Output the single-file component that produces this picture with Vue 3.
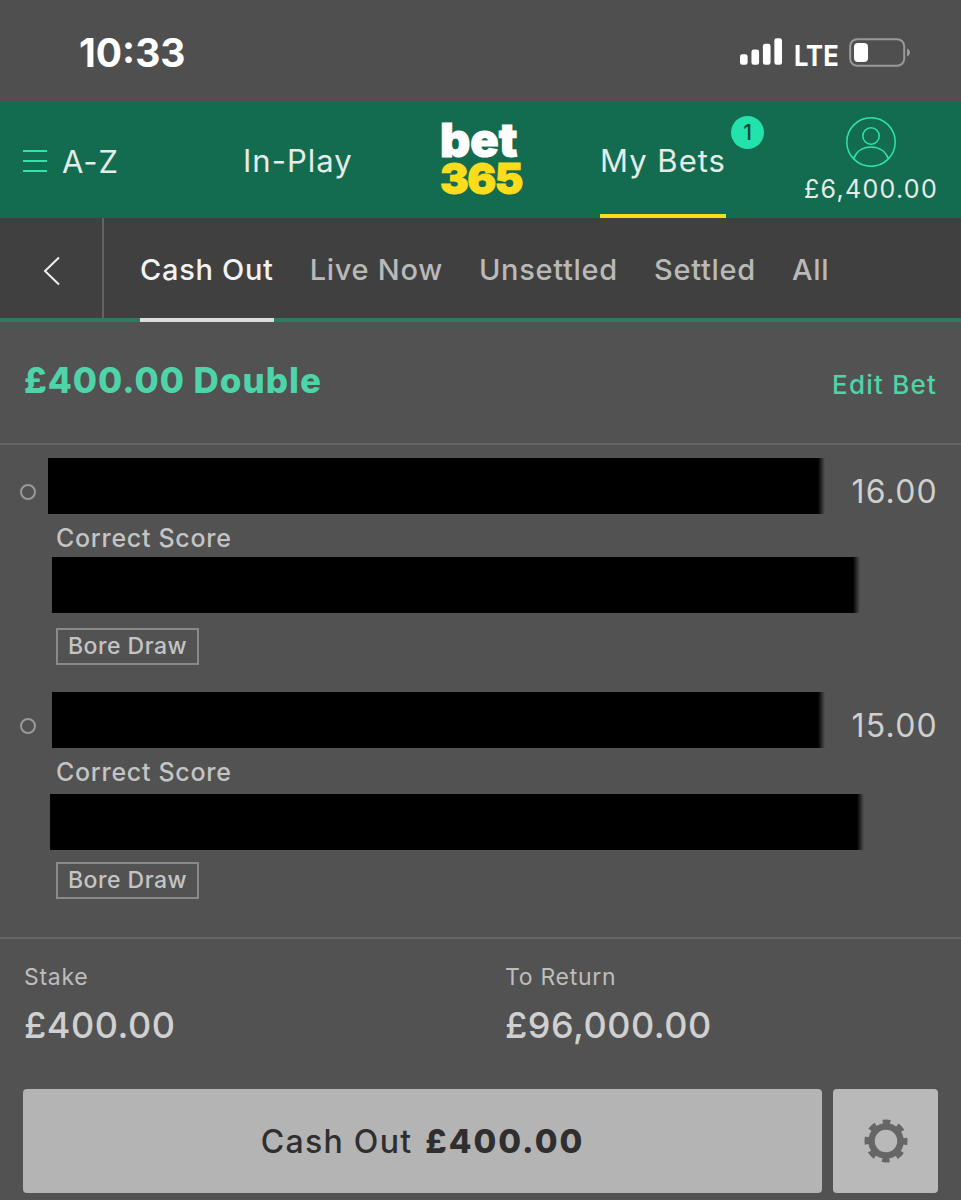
<template>
  <div class="screen">
    <div class="status">
      <span class="time">10:33</span>
      <div class="status-right">
        <svg class="signal" width="42" height="27" viewBox="0 0 44 28">
          <rect x="0" y="17" width="8" height="11" rx="2.5" />
          <rect x="12" y="12" width="8" height="16" rx="2.5" />
          <rect x="24" y="6" width="8" height="22" rx="2.5" />
          <rect x="36" y="0" width="8" height="28" rx="2.5" />
        </svg>
        <span class="lte">LTE</span>
        <svg class="battery" width="62" height="30" viewBox="0 0 62 30">
          <rect x="1.2" y="1.2" width="54" height="26.6" rx="7" fill="none" stroke="#9a9a9a" stroke-width="2" />
          <rect x="5" y="5" width="14" height="19" rx="4" fill="#fff" />
          <path d="M58 10.5c2 .8 3 2.200 3 4s-1 3.200-3 4z" fill="#9a9a9a" />
        </svg>
      </div>
    </div>

    <header class="topbar">
      <div class="az">
        <svg width="24" height="22" viewBox="0 0 24 22">
          <path d="M0 1h24M0 11h24M0 21h24" stroke="#2fe3ac" stroke-width="2" fill="none" />
        </svg>
        <span>A-Z</span>
      </div>
      <span class="inplay">In-Play</span>
      <div class="logo">
        <span class="bet">bet</span>
        <span class="num">365</span>
      </div>
      <div class="mybets">
        <span>My Bets</span>
        <i class="badge">1</i>
      </div>
      <div class="account">
        <svg width="50" height="50" viewBox="0 0 50 50" fill="none" stroke="#2fe3ac" stroke-width="1.500">
          <circle cx="25" cy="25" r="24.200" />
          <circle cx="25" cy="19" r="8.200" />
          <path d="M7.500 42c3-8 10-12 17.500-12s14.500 4 17.500 12" />
        </svg>
        <span>£6,400.00</span>
      </div>
    </header>

    <nav class="subnav">
      <div class="back">
        <svg width="18" height="30" viewBox="0 0 18 30">
          <path d="M16 1.500 2 15l14 13.500" fill="none" stroke="#eee" stroke-width="2" />
        </svg>
      </div>
      <div class="tabs">
        <span v-for="(t, i) in tabs" :key="t" class="tab" :class="{ on: i === 0 }">{{ t }}</span>
      </div>
    </nav>

    <section class="title">
      <h1>£400.00 Double</h1>
      <span class="edit">Edit Bet</span>
    </section>

    <section class="legs">
      <div v-for="leg in legs" :key="leg.odds" class="leg">
        <div class="top-row">
          <i class="dot"></i>
          <div class="redact" :style="{ marginLeft: leg.nameLeft + 'px', width: leg.nameWidth + 'px' }"></div>
          <span class="odds">{{ leg.odds }}</span>
        </div>
        <div class="market">Correct Score</div>
        <div class="redact second" :style="{ top: leg.teamTop + 'px', left: leg.teamLeft + 'px', width: leg.teamWidth + 'px' }"></div>
        <span class="tag">Bore Draw</span>
      </div>
    </section>

    <section class="totals">
      <div class="col">
        <label>Stake</label>
        <strong>£400.00</strong>
      </div>
      <div class="col">
        <label>To Return</label>
        <strong>£96,000.00</strong>
      </div>
    </section>

    <section class="actions">
      <button class="cash">Cash Out <b>£400.00</b></button>
      <button class="gear">
        <svg width="46" height="46" viewBox="0 0 46 46" fill="none" stroke="#666">
          <circle cx="23" cy="23" r="14.500" stroke-width="6.500" />
          <circle cx="23" cy="23" r="19" stroke-width="5" stroke-dasharray="7.500 7.420" stroke-dashoffset="3.750" />
        </svg>
      </button>
    </section>
  </div>
</template>

<script setup>
const tabs = ['Cash Out', 'Live Now', 'Unsettled', 'Settled', 'All']

const legs = [
  { odds: '16.00', nameLeft: 12, nameWidth: 777, teamLeft: 52, teamWidth: 808, teamTop: 99 },
  { odds: '15.00', nameLeft: 16, nameWidth: 773, teamLeft: 50, teamWidth: 814, teamTop: 102 }
]
</script>

<style>
html,
body {
  background: #525252;
}
</style>

<style scoped>
.screen {
  width: 961px;
  height: 1200px;
  overflow: hidden;
  background: #525252;
  color: #c6c6c6;
  font-family: Inter, "Liberation Sans", sans-serif;
}

.status {
  height: 101px;
  box-sizing: border-box;
  display: flex;
  justify-content: space-between;
  padding: 32px 50px 0 79px;
  background: #4f4f4f;
}

.time {
  font-size: 39px;
  line-height: 42px;
  font-weight: 700;
  color: #fff;
}

.status-right {
  display: flex;
  align-items: flex-start;
  padding-top: 6px;
}

.signal {
  fill: #fff;
}

.lte {
  font-size: 29px;
  line-height: 36px;
  font-weight: 700;
  color: #fff;
  margin-left: 12px;
  transform: scaleX(0.88);
  transform-origin: left center;
  width: 45px;
}

.battery {
  margin-left: 10px;
}

.topbar {
  height: 117px;
  position: relative;
  display: flex;
  background: #146c50;
  color: #e4ece8;
  font-size: 31px;
  letter-spacing: 1px;
}

.az {
  width: 243px;
  box-sizing: border-box;
  padding-left: 23px;
  display: flex;
  align-items: center;
  gap: 15px;
  height: 120px;
}

.inplay {
  width: 197px;
  line-height: 120px;
}

.logo {
  width: 160px;
  display: flex;
  flex-direction: column;
  padding-top: 20px;
  font-weight: 900;
  line-height: 38px;
  -webkit-text-stroke: 1px currentColor;
  letter-spacing: 0;
}

.bet {
  color: #fff;
  font-size: 47px;
}

.num {
  color: #fbdd1c;
  font-size: 43px;
  letter-spacing: -1.500px;
}

.mybets {
  width: 126px;
  position: relative;
  line-height: 120px;
  white-space: nowrap;
  height: 117px;
  box-sizing: border-box;
  border-bottom: 4px solid #f4dd22;
  text-align: center;
}

.badge {
  position: absolute;
  left: 131px;
  top: 15px;
  width: 33px;
  height: 33px;
  border-radius: 50%;
  background: #22e3ac;
  color: #104a38;
  font-style: normal;
  font-size: 21px;
  font-weight: 500;
  line-height: 33px;
  text-align: center;
  letter-spacing: 0;
}

.account {
  margin-left: 79px;
  width: 132px;
  padding-top: 16px;
  display: flex;
  flex-direction: column;
  align-items: center;
  font-size: 25px;
  line-height: 32px;
  letter-spacing: 1.300px;
  gap: 6px;
  white-space: nowrap;
}

.subnav {
  height: 104px;
  box-sizing: border-box;
  display: flex;
  background: #404040;
  border-bottom: 4px solid #2f7a62;
}

.back {
  width: 104px;
  box-sizing: border-box;
  border-right: 2px solid #636363;
  padding: 38px 0 0 43px;
}

.tabs {
  display: flex;
  gap: 36px;
  padding-left: 36px;
}

.tab {
  font-size: 29px;
  font-weight: 500;
  line-height: 104px;
  height: 104px;
  box-sizing: border-box;
  white-space: nowrap;
  color: #b9b9b9;
  letter-spacing: 0.700px;
}

.tab.on {
  color: #f2f2f2;
  border-bottom: 4px solid #dcdcdc;
}

.title {
  height: 123px;
  box-sizing: border-box;
  padding: 0 24px;
  display: flex;
  justify-content: space-between;
  align-items: center;
  border-bottom: 2px solid #666;
}

h1 {
  margin: 0 0 5px;
  font-size: 35px;
  font-weight: 800;
  color: #4fd3a8;
  letter-spacing: 1px;
}

.edit {
  margin-top: 4px;
  font-size: 26px;
  font-weight: 500;
  color: #4fd3a8;
  letter-spacing: 1.200px;
}

.legs {
  height: 494px;
  box-sizing: border-box;
  padding-top: 13px;
  border-bottom: 2px solid #666;
}

.leg {
  height: 234px;
  position: relative;
}

.top-row {
  display: flex;
  align-items: center;
  height: 56px;
  padding: 0 23px 0 20px;
}

.dot {
  width: 16px;
  height: 16px;
  box-sizing: border-box;
  border: 2px solid #999;
  border-radius: 50%;
  flex: none;
  margin-top: 11px;
}

.redact {
  height: 56px;
  background: linear-gradient(to right, #000 calc(100% - 7px), rgba(0, 0, 0, 0));
  flex: none;
}

.odds {
  margin-left: auto;
  margin-top: 11px;
  font-size: 32px;
  color: #cfcfcf;
  letter-spacing: 1.200px;
}

.market {
  margin: 3px 0 0 56px;
  font-size: 25px;
  font-weight: 500;
  line-height: 43px;
  color: #c4c4c4;
  letter-spacing: 0.700px;
}

.second {
  position: absolute;
}

.tag {
  position: absolute;
  left: 56px;
  top: 170px;
  width: 143px;
  height: 37px;
  box-sizing: border-box;
  border: 2px solid #8a8a8a;
  font-size: 23px;
  font-weight: 500;
  line-height: 33px;
  text-align: center;
  color: #c4c4c4;
  letter-spacing: 0.500px;
}

.totals {
  display: flex;
  padding: 23px 24px 0;
  height: 150px;
  box-sizing: border-box;
}

.col {
  width: 481px;
  flex: none;
  display: flex;
  flex-direction: column;
}

.col label {
  font-size: 23px;
  line-height: 30px;
  color: #bdbdbd;
  letter-spacing: 0.700px;
}

.col strong {
  margin-top: 11px;
  font-size: 36px;
  line-height: 44px;
  font-weight: 500;
  color: #d0d0d0;
  letter-spacing: 0.500px;
}

.actions {
  display: flex;
  padding: 0 23px;
  gap: 11px;
}

button {
  border: none;
  height: 104px;
  border-radius: 4px;
  font-family: inherit;
}

.cash {
  width: 799px;
  background: #b4b4b4;
  color: #2f2f2f;
  font-size: 32px;
  font-weight: 500;
  letter-spacing: 1.300px;
}

.cash b {
  font-size: 33px;
  font-weight: 800;
  margin-left: 3px;
  letter-spacing: 2px;
}

.gear {
  width: 105px;
  background: #b9b9b9;
  padding: 0;
  display: flex;
  align-items: center;
  justify-content: center;
}
</style>
